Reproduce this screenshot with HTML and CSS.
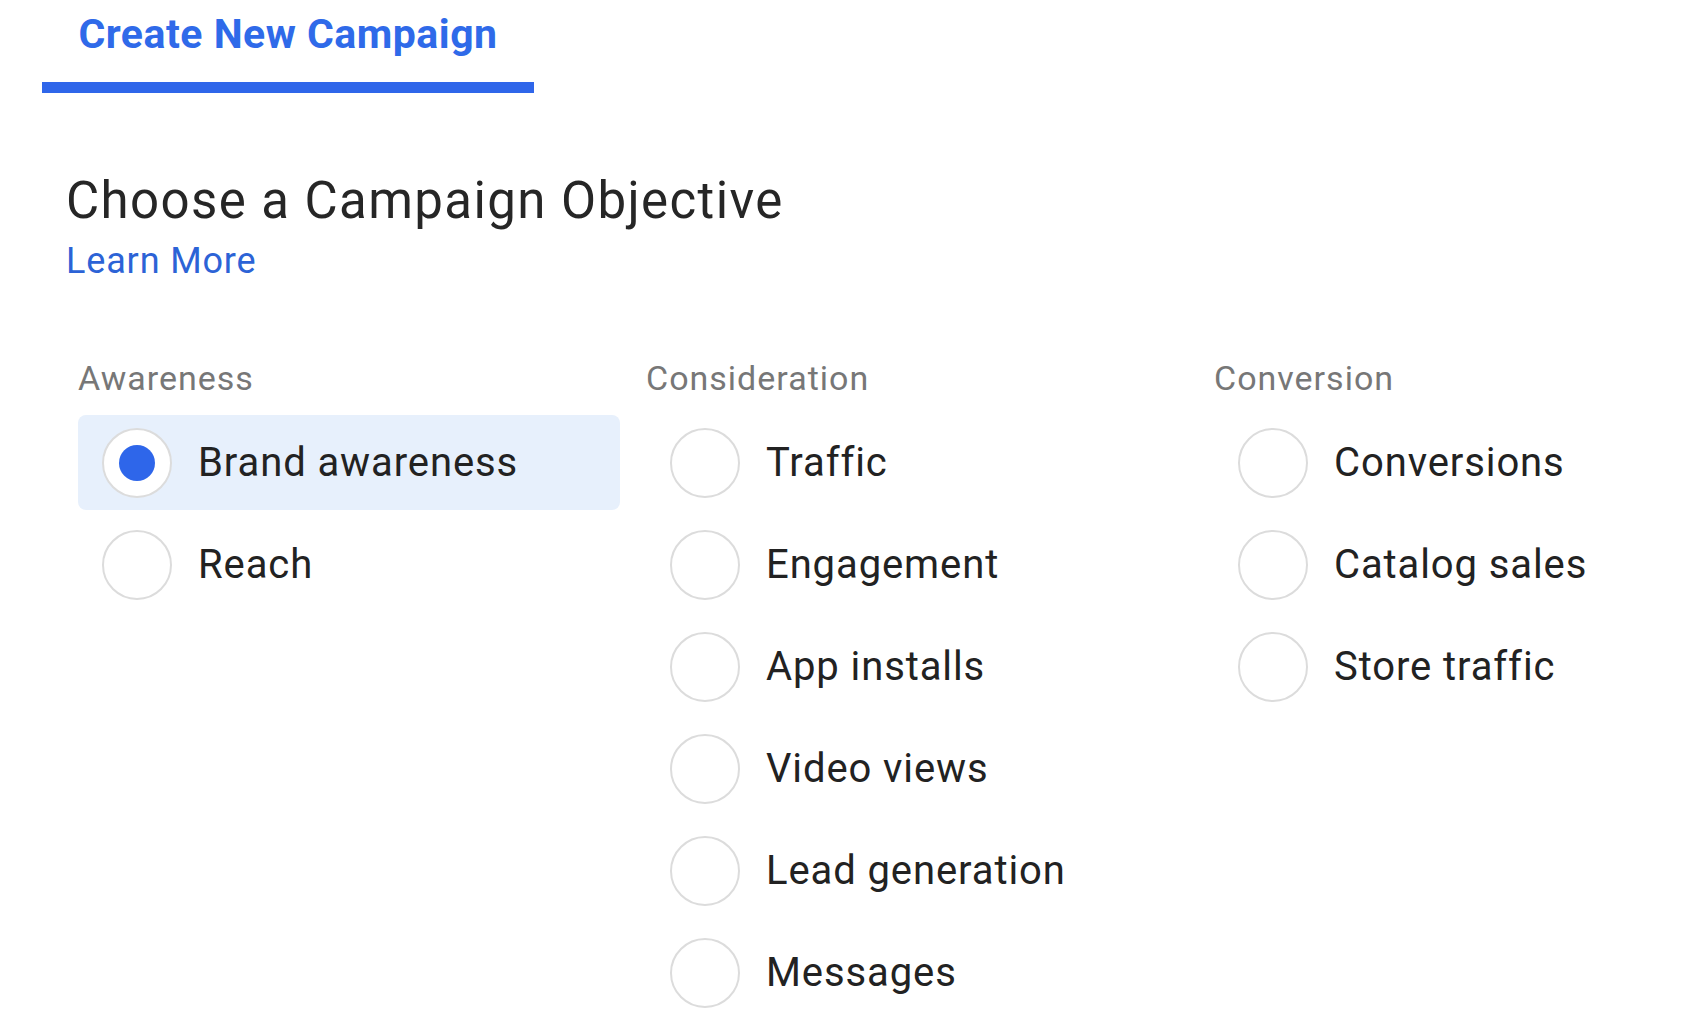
FILE: index.html
```html
<!DOCTYPE html>
<html lang="en">
  <head>
    <meta charset="UTF-8" />
    <meta name="viewport" content="width=device-width, initial-scale=1.0" />
    <title>Create New Campaign</title>
    <link rel="stylesheet" href="styles.css">
  </head>
  <body>
    <div class="tabs">
      <div class="tab active">Create New Campaign</div>
    </div>

    <div class="content">
      <h2 class="title">Choose a Campaign Objective</h2>
      <a class="learn-more" href="#">Learn More</a>

      <div class="objectives">
        <div class="group">
          <div class="group-label">Awareness</div>
          <label class="option selected">
            <span class="radio"><span class="dot"></span></span>
            <span class="option-text">Brand awareness</span>
          </label>
          <label class="option">
            <span class="radio"></span>
            <span class="option-text">Reach</span>
          </label>
        </div>

        <div class="group">
          <div class="group-label">Consideration</div>
          <label class="option">
            <span class="radio"></span>
            <span class="option-text">Traffic</span>
          </label>
          <label class="option">
            <span class="radio"></span>
            <span class="option-text">Engagement</span>
          </label>
          <label class="option">
            <span class="radio"></span>
            <span class="option-text">App installs</span>
          </label>
          <label class="option">
            <span class="radio"></span>
            <span class="option-text">Video views</span>
          </label>
          <label class="option">
            <span class="radio"></span>
            <span class="option-text">Lead generation</span>
          </label>
          <label class="option">
            <span class="radio"></span>
            <span class="option-text">Messages</span>
          </label>
        </div>

        <div class="group">
          <div class="group-label">Conversion</div>
          <label class="option">
            <span class="radio"></span>
            <span class="option-text">Conversions</span>
          </label>
          <label class="option">
            <span class="radio"></span>
            <span class="option-text">Catalog sales</span>
          </label>
          <label class="option">
            <span class="radio"></span>
            <span class="option-text">Store traffic</span>
          </label>
        </div>
      </div>
    </div>
  </body>
</html>
```

FILE: styles.css
```css
* {
  margin: 0;
  padding: 0;
  box-sizing: border-box;
}
body {
  font-family: Roboto, "Liberation Sans", Arial, sans-serif;
  background-color: #fff;
  color: #222;
}

.tabs {
  padding-left: 42px;
}

.tab {
  width: 492px;
  padding-top: 10px;
  padding-bottom: 24px;
  text-align: center;
  font-size: 41px;
  font-weight: bold;
  line-height: 48px;
  letter-spacing: 0.5px;
  color: #2f6ae9;
}

.tab.active {
  border-bottom: 11px solid #2f66ea;
}

.content {
  padding-left: 66px;
}

.title {
  margin-top: 78px;
  font-size: 51px;
  font-weight: normal;
  line-height: 60px;
  letter-spacing: 1.4px;
  color: #262626;
}

.learn-more {
  display: inline-block;
  margin-top: 9px;
  font-size: 36px;
  line-height: 42px;
  letter-spacing: 0.85px;
  color: #2c63d6;
  text-decoration: none;
}

.objectives {
  display: grid;
  grid-template-columns: repeat(3, 542px);
  column-gap: 26px;
  margin-top: 76px;
  margin-left: 12px;
}

.group-label {
  font-size: 34px;
  line-height: 40px;
  letter-spacing: 1px;
  color: #777;
  margin-bottom: 17px;
}

.option {
  display: flex;
  align-items: center;
  gap: 26px;
  height: 95px;
  margin-bottom: 7px;
  padding-left: 24px;
  border-radius: 8px;
  cursor: pointer;
}

.option.selected {
  background-color: #e7f0fc;
}

.radio {
  display: flex;
  align-items: center;
  justify-content: center;
  width: 70px;
  height: 70px;
  border: 2px solid #dcdcdc;
  border-radius: 50%;
  background-color: #fff;
}

.dot {
  width: 36px;
  height: 36px;
  border-radius: 50%;
  background-color: #2e66ea;
}

.option-text {
  font-size: 40px;
  letter-spacing: 0.9px;
  color: #222;
}
```
